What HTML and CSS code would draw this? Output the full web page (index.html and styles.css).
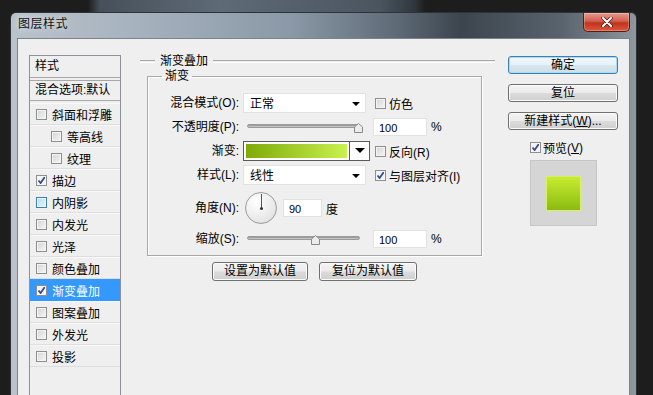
FILE: index.html
```html
<!DOCTYPE html>
<html lang="zh-CN">
<head>
    <meta charset="UTF-8">
    <meta name="viewport" content="width=device-width, initial-scale=1.0">
    <title>图层样式</title>
    <link rel="stylesheet" href="styles.css">
</head>
<body>
    <div class="window">
        <div class="titlebar">
            <span class="title">图层样式</span>
            <span class="close">
                <svg width="12" height="10" viewBox="0 0 12 10">
                    <path d="M2 1 L10 9 M10 1 L2 9" stroke="#3a1a16" stroke-width="3.4" stroke-linecap="round"/>
                    <path d="M2 1 L10 9 M10 1 L2 9" stroke="#fff" stroke-width="2" stroke-linecap="round"/>
                </svg>
            </span>
        </div>
        <div class="client">
            <div class="stylelist">
                <div class="list-head">样式</div>
                <div class="list-blend">混合选项:默认</div>
                <div class="item"><span class="cb"></span>斜面和浮雕</div>
                <div class="item sub"><span class="cb"></span>等高线</div>
                <div class="item sub"><span class="cb"></span>纹理</div>
                <div class="item"><span class="cb checked"></span>描边</div>
                <div class="item"><span class="cb hover"></span>内阴影</div>
                <div class="item"><span class="cb"></span>内发光</div>
                <div class="item"><span class="cb"></span>光泽</div>
                <div class="item"><span class="cb"></span>颜色叠加</div>
                <div class="item selected"><span class="cb checked"></span>渐变叠加</div>
                <div class="item"><span class="cb"></span>图案叠加</div>
                <div class="item"><span class="cb"></span>外发光</div>
                <div class="item"><span class="cb"></span>投影</div>
            </div>

            <div class="panel">
                <div class="section-title"><span>渐变叠加</span></div>
                <fieldset class="group">
                    <legend>渐变</legend>
                    <div class="form">
                        <label>混合模式(O):</label>
                        <div class="combo">正常<span class="arrow"></span></div>
                        <div class="extra"><span class="cb"></span>仿色</div>

                        <label>不透明度(P):</label>
                        <div class="slider">
                            <span class="track"></span>
                            <svg class="thumb" style="left: 107px" width="9" height="10" viewBox="0 0 9 10"><polygon points="0.5,4 4.5,0.5 8.5,4 8.5,9.5 0.5,9.5" fill="#ececec" stroke="#8a8a8a"/></svg>
                        </div>
                        <div class="extra"><span class="field wide">100</span><span class="unit">%</span></div>

                        <label>渐变:</label>
                        <div class="gradient"><span class="ramp"></span><span class="drop"></span></div>
                        <div class="extra"><span class="cb"></span>反向(R)</div>

                        <label>样式(L):</label>
                        <div class="combo">线性<span class="arrow"></span></div>
                        <div class="extra"><span class="cb checked"></span>与图层对齐(I)</div>

                        <label class="tall">角度(N):</label>
                        <div class="angle">
                            <span class="dial"></span>
                            <span class="field short">90</span>
                            <span class="unit">度</span>
                        </div>
                        <div></div>

                        <label>缩放(S):</label>
                        <div class="slider">
                            <span class="track"></span>
                            <svg class="thumb" style="left: 64px" width="9" height="10" viewBox="0 0 9 10"><polygon points="0.5,4 4.5,0.5 8.5,4 8.5,9.5 0.5,9.5" fill="#ececec" stroke="#8a8a8a"/></svg>
                        </div>
                        <div class="extra"><span class="field wide">100</span><span class="unit">%</span></div>
                    </div>
                </fieldset>
                <div class="defaults">
                    <button class="btn">设置为默认值</button>
                    <button class="btn">复位为默认值</button>
                </div>
            </div>

            <div class="actions">
                <button class="btn default">确定</button>
                <button class="btn">复位</button>
                <button class="btn">新建样式(<u>W</u>)...</button>
                <div class="preview-check"><span class="cb checked"></span>预览(<u>V</u>)</div>
                <div class="preview"><span class="swatch"></span></div>
            </div>
        </div>
    </div>
</body>
</html>
```

FILE: styles.css
```css
* {
    box-sizing: border-box;
}
body {
    margin: 0;
    background: #1d1d1d linear-gradient(to right, #1d1d1d 88px, #46505a 100px, #5e6a76 220px, #4a5560 380px, #30363c 415px, #1d1d1d 425px) no-repeat 0 0 / 100% 12px;
    font-family: "Liberation Sans", "Noto Sans CJK SC", sans-serif;
    font-size: 12px;
    color: #000;
    overflow: hidden;
}
.window {
    margin: 12px 0 0 10px;
    width: 627px;
    height: 383px;
    padding: 0 6px;
    border: 1px solid #2e3338;
    border-bottom: none;
    border-radius: 6px 6px 0 0;
    background: linear-gradient(to right, #bac3cc 0%, #a6b2be 20%, #8a98a7 45%, #5d6975 62%, #3c454e 72%, #59636d 88%, #8e969e 100%);
    overflow: hidden;
}
.titlebar {
    height: 25px;
    display: flex;
    justify-content: space-between;
    align-items: flex-start;
}
.title {
    margin-left: 1px;
    line-height: 22px;
    letter-spacing: 0.5px;
    color: #111;
    text-shadow: 0 0 6px rgba(255, 255, 255, 0.8);
}
.close {
    width: 47px;
    height: 19px;
    display: flex;
    align-items: center;
    justify-content: center;
    border: 1px solid #5a1c14;
    border-top: none;
    border-radius: 0 0 5px 5px;
    background: linear-gradient(#e89a8e 0%, #d2604f 45%, #c2321f 55%, #d65a3c 100%);
    box-shadow: inset 0 0 0 1px rgba(255, 255, 255, 0.25);
}
.client {
    height: 358px;
    display: flex;
    align-items: flex-start;
    padding: 15px 0 0 11px;
    border: 1px solid #7a848e;
    border-bottom: none;
    background: #efefef;
    overflow: hidden;
}

/* style list */
.stylelist {
    width: 92px;
    height: 350px;
    margin-top: 1px;
    border: 1px solid #8e9296;
    background: #efefef;
}
.list-head {
    height: 22px;
    line-height: 21px;
    padding-left: 5px;
    border-bottom: 1px solid #a8a8a8;
}
.list-blend {
    height: 21px;
    margin-top: 2px;
    line-height: 19px;
    padding-left: 5px;
    border-top: 1px solid #a8a8a8;
    border-bottom: 1px solid #a8a8a8;
    white-space: nowrap;
    overflow: hidden;
}
.item {
    height: 22px;
    display: flex;
    align-items: center;
    padding-left: 6px;
    border-top: 1px solid #f8f8f8;
    border-bottom: 1px solid #dedede;
}
.list-blend + .item {
    margin-top: 2px;
}
.item.sub {
    padding-left: 21px;
}
.item.selected {
    background: #3399ff;
    color: #fff;
    border-color: #3399ff;
}
.item .cb {
    margin-right: 5px;
}

/* checkbox */
.cb {
    display: inline-block;
    flex: none;
    width: 11px;
    height: 11px;
    border: 1px solid #8e8f8f;
    background: linear-gradient(135deg, #d4d4d4, #f7f7f7);
    box-shadow: inset 0 0 0 1px #f4f4f4;
    vertical-align: middle;
}
.cb.hover {
    border-color: #3c7fb1;
    background: linear-gradient(135deg, #b4def5, #e4f5fd);
}
.cb.checked {
    background: #f4f4f4 url("data:image/svg+xml;utf8,<svg xmlns='http://www.w3.org/2000/svg' width='9' height='9'><path d='M1.5 4.5 L3.6 7 L7.8 1' fill='none' stroke='%23364b8c' stroke-width='1.8'/></svg>") no-repeat center;
}

/* main panel */
.panel {
    width: 355px;
    margin-left: 19px;
}
.section-title {
    display: flex;
    align-items: center;
    height: 14px;
    line-height: 14px;
}
.section-title::before,
.section-title::after {
    content: "";
    height: 1px;
    border-top: 1px solid #a8a8a8;
    border-bottom: 1px solid #fff;
}
.section-title::before {
    width: 15px;
}
.section-title::after {
    flex: 1;
}
.section-title span {
    margin: 0 5px;
}
.group {
    margin: 0 13px 0 7px;
    padding: 9px 0 6px 0;
    border: 1px solid #a8a8a8;
    box-shadow: inset 1px 1px 0 #fff, 1px 1px 0 #fff;
    min-width: 0;
}
.group legend {
    margin-left: 14px;
    padding: 0 3px;
    line-height: 16px;
}
.form {
    display: grid;
    grid-template-columns: 91px 123px 1fr;
    grid-template-rows: 20px 20px 20px 20px 36px 20px;
    row-gap: 4px;
    column-gap: 4px;
}
.form label {
    text-align: right;
    line-height: 20px;
    white-space: nowrap;
}
.form label.tall {
    line-height: 38px;
}
.combo {
    position: relative;
    height: 20px;
    line-height: 20px;
    padding-left: 6px;
    background: #fff;
    border: 1px solid #e2e2e2;
}
.arrow {
    position: absolute;
    right: 5px;
    top: 8px;
    border-left: 4px solid transparent;
    border-right: 4px solid transparent;
    border-top: 4px solid #000;
}
.extra {
    display: flex;
    align-items: center;
    white-space: nowrap;
}
.extra .cb {
    margin: 0 3px 0 5px;
}
.field {
    display: inline-block;
    height: 18px;
    line-height: 18px;
    padding-left: 5px;
    background: #fff;
    border: 1px solid #e2e2e2;
    font-size: 11px;
}
.field.wide {
    width: 54px;
    margin-left: 3px;
}
.field.short {
    width: 39px;
}
.unit {
    margin-left: 4px;
}
.slider {
    position: relative;
    width: 113px;
    margin-left: 4px;
}
.track {
    position: absolute;
    left: 0;
    right: 0;
    top: 7px;
    height: 4px;
    border: 1px solid #9a9a9a;
    border-radius: 2px;
    background: linear-gradient(#8a8a8a, #d6d6d6);
}
.thumb {
    position: absolute;
    top: 6px;
}
.gradient {
    display: flex;
    width: 127px;
    height: 20px;
    border: 1px solid #5a5a5a;
    box-shadow: inset 0 0 0 1px #fff;
    background: #fff;
    padding: 2px;
}
.ramp {
    flex: 1;
    background: linear-gradient(to right, #7faa08, #c9f150);
}
.drop {
    position: relative;
    width: 20px;
    margin: -2px -2px -2px 2px;
    border-left: 1px solid #5a5a5a;
    background: #fff;
}
.drop::after {
    content: "";
    position: absolute;
    left: 5px;
    top: 6px;
    border-left: 5px solid transparent;
    border-right: 5px solid transparent;
    border-top: 5px solid #000;
}
.angle {
    display: flex;
    align-items: center;
    padding-top: 2px;
}
.dial {
    position: relative;
    width: 32px;
    height: 32px;
    margin: 0 6px 0 2px;
    border: 1px solid #9c9c9c;
    border-radius: 50%;
    background: radial-gradient(circle at 35% 30%, #ffffff, #e6e6e6 70%, #d6d6d6);
}
.dial::before {
    content: "";
    position: absolute;
    left: 15px;
    top: 1px;
    width: 1px;
    height: 14px;
    background: #555;
}
.dial::after {
    content: "";
    position: absolute;
    left: 14px;
    top: 14px;
    width: 3px;
    height: 3px;
    border-radius: 50%;
    background: #333;
}
.defaults {
    display: flex;
    justify-content: center;
    gap: 11px;
    margin: 6px 13px 0 7px;
}
.btn {
    height: 19px;
    padding: 0;
    font: 12px "Liberation Sans", "Noto Sans CJK SC", sans-serif;
    line-height: 17px;
    color: #000;
    border: 1px solid #707070;
    border-radius: 3px;
    background: linear-gradient(#f4f4f4 0%, #ebebeb 48%, #dcdcdc 52%, #cfcfcf 100%);
    box-shadow: inset 0 0 0 1px #fbfbfb;
}
.defaults .btn:first-child {
    width: 96px;
}
.defaults .btn:last-child {
    width: 98px;
}

/* right column */
.actions {
    width: 110px;
    margin-left: 13px;
    padding-top: 2px;
    display: flex;
    flex-direction: column;
    gap: 10px;
}
.actions .btn {
    height: 18px;
    line-height: 16px;
    width: 110px;
}
.btn.default {
    border-color: #3c7fb1;
    box-shadow: inset 0 0 0 1px #a7dcf6;
    background: linear-gradient(#f2f8fc 0%, #e6f1f9 48%, #d8e6ef 52%, #cfdde7 100%);
}
.preview-check {
    display: flex;
    align-items: center;
    height: 11px;
    margin: 2px 0 0 22px;
}
.preview-check .cb {
    margin-right: 2px;
}
.preview {
    width: 67px;
    height: 66px;
    margin: -3px 0 0 22px;
    padding: 15px;
    border: 1px solid #c6c6c6;
    background: #d5d5d5;
}
.swatch {
    display: block;
    width: 35px;
    height: 35px;
    border: 1px solid #d9ef6a;
    background: linear-gradient(#c8ec30, #8bbb12);
}
```
